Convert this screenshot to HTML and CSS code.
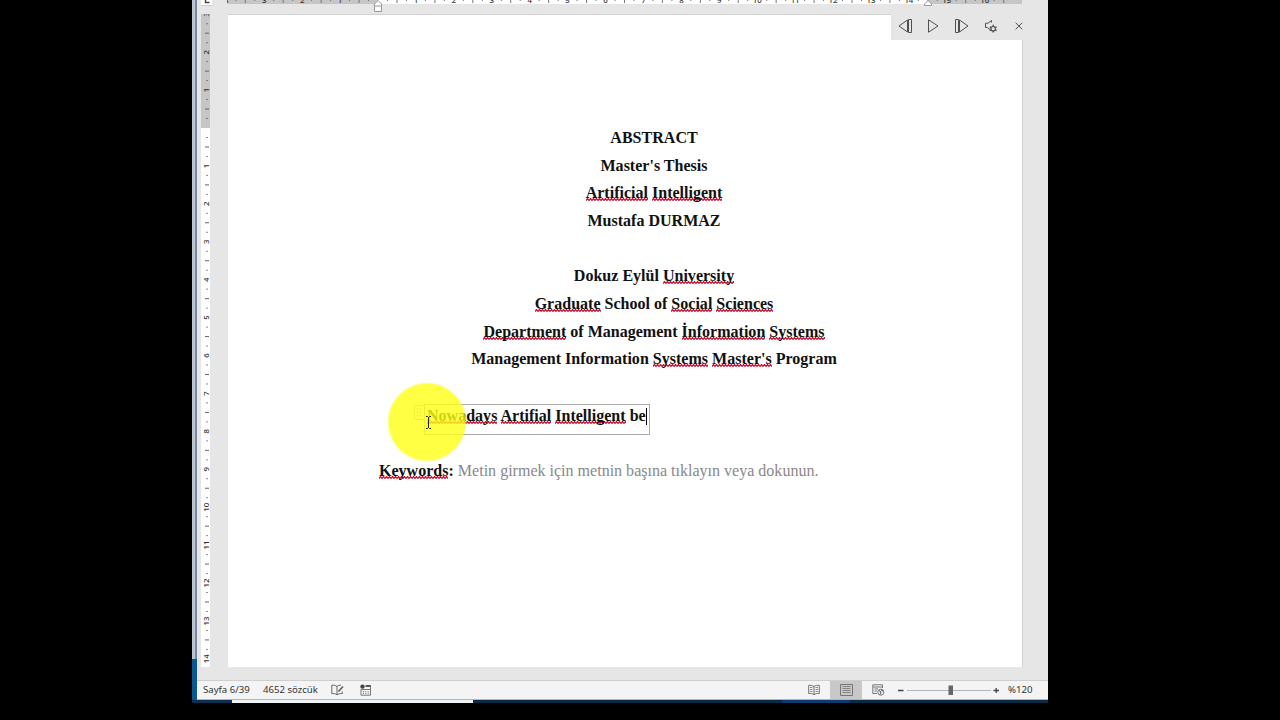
FILE: index.html
```html
<!DOCTYPE html>
<html lang="tr">
<head>
    <meta charset="UTF-8">
    <meta name="viewport" content="width=device-width, initial-scale=1.0">
    <title>Abstract</title>
    <link rel="stylesheet" href="styles.css">
</head>
<body>
    <div class="desktop">
        <div class="edge"></div>
        <div class="window">
            <div class="top">
                <div class="tab-type">
                    <svg width="11" height="6"><path d="M4.5 0V2.5H8.5" fill="none" stroke="#444" stroke-width="1.4"/></svg>
                </div>
                <svg class="ruler-h" id="rulerH" width="796" height="14">
                    <rect x="0" y="0" width="795" height="4" fill="#c6c6c6"/>
                    <rect x="151" y="0" width="550" height="4" fill="#fff"/>
                </svg>
            </div>
            <div class="workspace">
                <svg class="ruler-v" id="rulerV" width="9" height="653">
                    <rect width="9" height="653" fill="#fff"/>
                    <rect width="9" height="114" fill="#c6c6c6"/>
                </svg>
                <div class="page">
                    <div class="heading">
                        <p>ABSTRACT</p>
                        <p>Master's Thesis</p>
                        <p><u>Artificial</u> <u>Intelligent</u></p>
                        <p>Mustafa DURMAZ</p>
                        <p>&nbsp;</p>
                        <p>Dokuz Eylül <u>University</u></p>
                        <p><u>Graduate</u> School of <u>Social</u> <u>Sciences</u></p>
                        <p><u>Department</u> of Management <u>İnformation</u> <u>Systems</u></p>
                        <p>Management Information <u>Systems</u> <u>Master's</u> Program</p>
                    </div>
                    <div class="control">
                        <svg class="handle" width="10" height="15">
                            <path d="M9.5 .5H.5V14.5H9.5" fill="none" stroke="#b5b5b5"/>
                            <path d="M3.5 3V12M6.5 3V12" stroke="#999" stroke-dasharray="1.5 2"/>
                        </svg>
                        <p><u>Nowadays</u> <u>Artifial</u> <u>Intelligent</u> be<span class="caret"></span></p>
                    </div>
                    <p class="keywords"><b><u>Keywords</u>:</b> <span>Metin girmek için metnin başına tıklayın veya dokunun.</span></p>
                </div>
            </div>
            <div class="status">
                <span class="pages">Sayfa 6/39</span>
                <span class="words">4652 sözcük</span>
                <svg class="proof" width="13" height="12" fill="none" stroke="#666">
                    <path d="M6 2.5C4.5 1.2 2.5 1 .8 1.2V9.6C2.8 9.4 4.6 9.6 6 10.8V2.5C7 1.5 8.5 1.1 10 1.1M6 10.8C7.5 9.8 9 9.5 11.3 9.6V7.5"/>
                    <path d="M7.5 7.5L12 2.5" stroke-width="1.8"/>
                </svg>
                <svg class="macro" width="12" height="12">
                    <circle cx="2.5" cy="2.6" r="2.2" fill="#444"/>
                    <path d="M5.5 2H11" stroke="#555" stroke-width="2"/>
                    <path d="M1 5.5V11.2H10.5V2M1 5.5H10.5" fill="none" stroke="#777"/>
                    <path d="M3.5 7V10M5.8 7V10M8.2 7V10" stroke="#888" stroke-dasharray="1.2 .6"/>
                </svg>
                <div class="views">
                    <div class="view">
                        <svg width="12" height="12" fill="none" stroke="#707070">
                            <path d="M6 2.5C4.5 1.3 2.5 1.2.7 1.4V9.5C2.8 9.3 4.6 9.6 6 10.7C7.4 9.6 9.2 9.3 11.3 9.5V1.4C9.5 1.2 7.5 1.3 6 2.5V11"/>
                            <path d="M2 3.5H4.5M2 5.5H4.5M2 7.5H4.5M7.5 3.5H10M7.5 5.5H10M7.5 7.5H10" stroke-width=".8"/>
                        </svg>
                    </div>
                    <div class="view active">
                        <svg width="13" height="12" fill="none" stroke="#777">
                            <path d="M.5.5H12.5V11.5H.5Z"/>
                            <path d="M2.5 2.5H10.5M2.5 4.5H10.5M2.5 6.5H10.5M2.5 8.5H10.5" stroke="#858585"/>
                        </svg>
                    </div>
                    <div class="view">
                        <svg width="13" height="12" fill="none" stroke="#777">
                            <path d="M5 9.5H.8V.8H10.5V4M1 3H10M2.5 5H6M2.5 7H5"/>
                            <circle cx="8.8" cy="8.2" r="3"/>
                            <path d="M7 6.5L9 8L8 10.5M9 6L11 7" stroke="#555"/>
                        </svg>
                    </div>
                </div>
                <div class="zoom">
                    <svg width="101" height="12">
                        <path d="M0 6.5H5.5" stroke="#444" stroke-width="1.5"/>
                        <path d="M9 6.5H93" stroke="#b4b4b4"/>
                        <rect x="50.5" y="1.5" width="4.5" height="9.5" fill="#666"/>
                        <path d="M95.5 6.5H101M98.2 4V9" stroke="#444" stroke-width="1.3"/>
                    </svg>
                    <span>%120</span>
                </div>
            </div>
        </div>
        <div class="taskbar"></div>

        <div class="player">
            <svg width="132" height="26" fill="none" stroke="#505050">
                <path d="M16.5 6V18L8 12ZM17.5 5.5H20.5V18.5H17.5Z"/>
                <path d="M37.5 5.8V18.2L47 12Z"/>
                <path d="M68.5 6V18L77 12ZM67.5 5.5H64.5V18.5H67.5Z"/>
                <path d="M100.5 8.5V6.5L97 9.2H94.5V13.5H96.5L99 15.8"/>
                <circle cx="102.2" cy="14.7" r="2.2" stroke="#555" stroke-width="1.2"/>
                <path d="M102.2 10.8V12.5M102.2 17V18.6M98.8 12.8L100.4 13.7M104 15.7L105.6 16.6M98.8 16.6L100.4 15.7M104 13.7L105.6 12.8" stroke="#555" stroke-width="1.5"/>
                <path d="M124.7 8.8L131.2 15.3M131.2 8.8L124.7 15.3"/>
            </svg>
        </div>
        <div class="spot"></div>
        <svg class="cursor" width="7" height="15" fill="none" stroke="#222">
            <path d="M1 1.5H2.5L3.5 2.5L4.5 1.5H6M3.5 2V13M1 13.5H2.5L3.5 12.5L4.5 13.5H6"/>
        </svg>
    </div>

    <script>
    const CM = 37.92;
    const NS = 'http://www.w3.org/2000/svg';

    function add(parent, tag, attrs, text) {
        const el = document.createElementNS(NS, tag);
        for (const key in attrs) {
            el.setAttribute(key, attrs[key]);
        }
        if (text) el.textContent = text;
        parent.appendChild(el);
    }

    // horizontal ruler, zero at the left margin
    const h = document.getElementById('rulerH');
    for (let q = -16; q <= 66; q++) {
        const x = 151 + q * CM / 4;
        if (q % 4 === 0) {
            if (q !== 0) add(h, 'text', { x: x, y: 3, 'text-anchor': 'middle' }, Math.abs(q / 4));
        } else {
            const len = q % 2 === 0 ? 3 : 1;
            add(h, 'rect', { x: x - 0.5, y: 0, width: 1, height: len, fill: '#777' });
        }
    }
    // indent markers
    add(h, 'path', { d: 'M147.5 11.5V4L151 .5L154.5 4V11.5ZM147.5 6H154.5', fill: '#fff', stroke: '#999' });
    add(h, 'path', { d: 'M697.5 5.5V4L701 .5L704.5 4V5.5Z', fill: '#fff', stroke: '#999' });

    // vertical ruler, zero at the top margin
    const v = document.getElementById('rulerV');
    for (let q = -12; q <= 56; q++) {
        const y = 114 + q * CM / 4;
        if (q % 4 === 0) {
            if (q !== 0) add(v, 'text', { transform: 'translate(8.2 ' + y + ') rotate(-90)', 'text-anchor': 'middle' }, Math.abs(q / 4));
        } else {
            const len = q % 2 === 0 ? 4 : 1.5;
            add(v, 'rect', { x: 6 - len / 2, y: y - 0.5, width: len, height: 1, fill: '#666' });
        }
    }
    </script>
</body>
</html>
```
FILE: styles.css
```css
body {
    margin: 0;
    height: 720px;
    overflow: hidden;
    background-color: #000;
    font-family: "Noto Sans", sans-serif;
}
svg {
    display: block;
}
p {
    margin: 0;
}
.desktop {
    position: relative;
    display: grid;
    grid-template-columns: 5px 851px;
    grid-template-rows: 700px 3px;
    width: 856px;
    margin-left: 192px;
}
.edge {
    background: linear-gradient(90deg, #bcc4cf 0 3px, #7888a0 3px);
    border-bottom: 41px solid #0b5793;
    box-sizing: border-box;
}
.window {
    display: flex;
    flex-direction: column;
    background-color: #e6e6e6;
}
.top {
    display: flex;
    height: 14px;
}
.tab-type {
    width: 11px;
    height: 5px;
    margin: 0 15px 0 4px;
    background-color: #fff;
    border-bottom: 1px solid #ccc;
}
.ruler-h text, .ruler-v text {
    font-size: 7.8px;
    font-weight: 500;
    fill: #333;
}
.workspace {
    display: flex;
    height: 667px;
}
.ruler-v {
    margin-left: 4px;
}
.page {
    width: 551px;
    height: 543px;
    margin-left: 18px;
    padding: 109px 93px 0 150px;
    border: 1px solid #d2d2d2;
    border-width: 1px 1px 0 0;
    background-color: #fff;
    font-family: "Liberation Serif", serif;
    font-size: 16.05px;
    line-height: 27.65px;
    color: #111;
}
.heading {
    text-align: center;
    font-weight: bold;
    padding-left: 1px;
}
/* spell checker squiggle */
u {
    text-decoration: none;
    background: url("data:image/svg+xml,%3Csvg xmlns='http://www.w3.org/2000/svg' width='3' height='3'%3E%3Cpath d='M0 2.5L1.5 .5L3 2.5' fill='none' stroke='%23c8102e' stroke-width='1.3'/%3E%3C/svg%3E") repeat-x left bottom;
}
.control {
    position: relative;
    width: 224px;
    height: 29px;
    margin: 31px 0 0 46px;
    border: 1px solid #aaa;
    font-weight: bold;
    line-height: 21px;
}
.control p {
    padding-left: 2px;
    white-space: nowrap;
}
.handle {
    position: absolute;
    left: -11px;
    top: 0;
}
.caret {
    display: inline-block;
    width: 1px;
    height: 17px;
    background-color: #000;
    vertical-align: -4px;
}
.keywords {
    margin-top: 22px;
    padding-left: 1px;
}
.keywords span {
    color: #888;
}
.status {
    display: flex;
    align-items: center;
    height: 18px;
    border-top: 1px solid #cfcfcf;
    border-bottom: 1px solid #9dbbcb;
    background-color: #f4f4f4;
    font-size: 9.6px;
    line-height: 12px;
    color: #333;
}
.status span {
    padding-bottom: 1px;
}
.pages {
    width: 60px;
    margin-left: 6px;
}
.words {
    width: 68px;
}
.proof {
    margin-right: 16px;
}
.views {
    display: flex;
    height: 100%;
    margin-left: auto;
}
.view {
    display: flex;
    align-items: center;
    justify-content: center;
    width: 32px;
}
.active {
    background-color: #c8c8c8;
}
.zoom {
    display: flex;
    align-items: center;
    gap: 9px;
    width: 150px;
    margin-left: 4px;
}
.taskbar {
    grid-column: 1 / 3;
    background: linear-gradient(90deg, #0b2f4d 40px, #eef3f6 40px 281px, #0a2b45 281px 590px, #0b3b70 590px 658px, #0a2b45 658px);
}
.player {
    position: absolute;
    left: 699px;
    top: 14px;
    width: 132px;
    height: 26px;
    background-color: #e6e6e6;
}
.spot {
    position: absolute;
    left: 195px;
    top: 382px;
    width: 80px;
    height: 80px;
    border-radius: 50%;
    background: radial-gradient(closest-side, rgba(255, 255, 20, 0.8) 94%, rgba(255, 255, 20, 0));
}
.cursor {
    position: absolute;
    left: 233px;
    top: 415px;
}
```
